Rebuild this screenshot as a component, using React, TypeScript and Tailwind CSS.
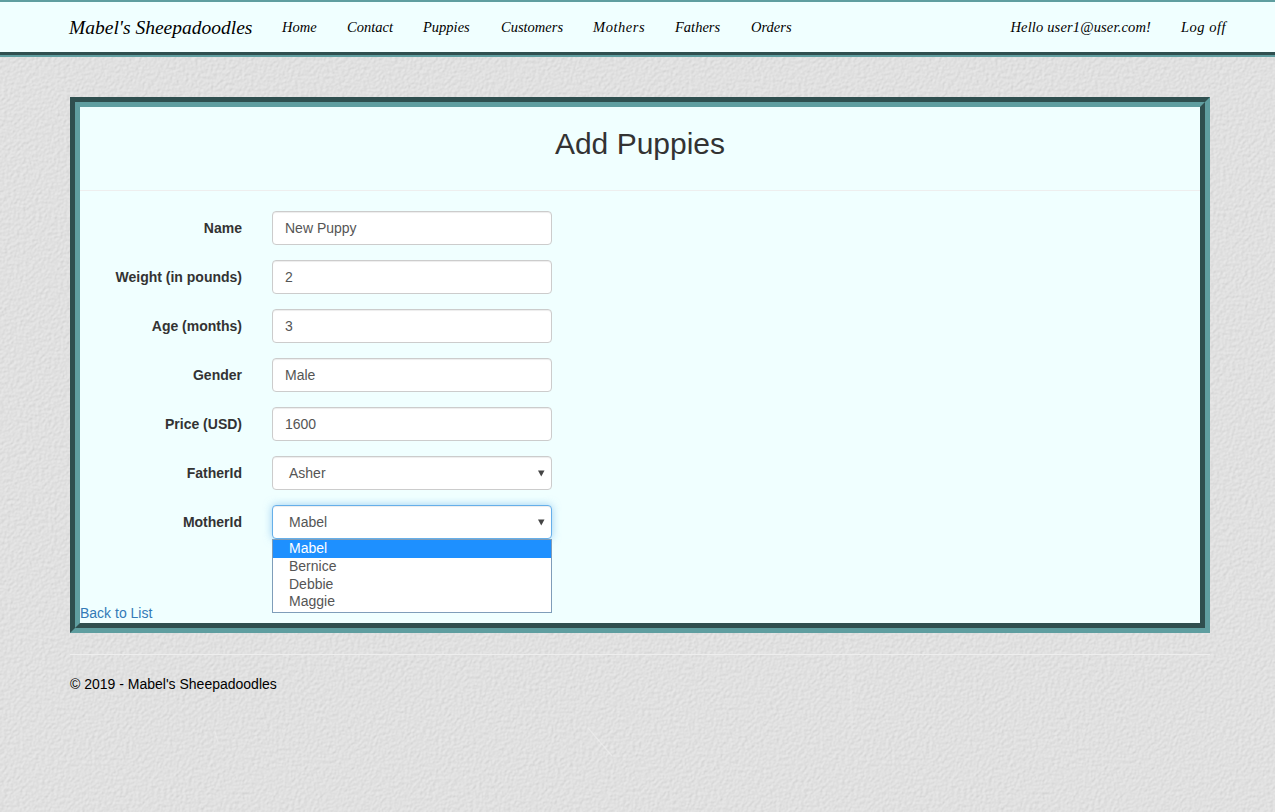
import React from "react";

const sans = "font-['Liberation_Sans',Arial,sans-serif]";
const script = "font-['Liberation_Serif',serif] italic";

function Field({ label, value }: { label: string; value: string }) {
  return (
    <div className="flex items-center h-[34px] mb-[15px]">
      <label className="w-[162px] text-right font-bold text-[14px] text-[#333] shrink-0">{label}</label>
      <div className="ml-[30px] w-[280px] h-[34px] rounded-[4px] border border-[#ccc] bg-white px-3 flex items-center text-[14px] text-[#555] shadow-[inset_0_1px_1px_rgba(0,0,0,0.075)]">
        {value}
      </div>
    </div>
  );
}

function SelectBox({ label, value, focus }: { label: string; value: string; focus?: boolean }) {
  return (
    <div className="flex items-center h-[34px] mb-[15px]">
      <label className="w-[162px] text-right font-bold text-[14px] text-[#333] shrink-0">{label}</label>
      <div
        className={
          focus
            ? "relative ml-[30px] w-[280px] h-[34px] rounded-[4px] border border-[#66afe9] bg-white pl-4 flex items-center text-[14px] text-[#555] shadow-[inset_0_1px_1px_rgba(0,0,0,0.075),0_0_8px_rgba(102,175,233,0.6)]"
            : "relative ml-[30px] w-[280px] h-[34px] rounded-[4px] border border-[#ccc] bg-white pl-4 flex items-center text-[14px] text-[#555] shadow-[inset_0_1px_1px_rgba(0,0,0,0.075)]"
        }
      >
        {value}
        <svg className="absolute right-[6px] top-[13px]" width="7" height="7" viewBox="0 0 7 7">
          <path d="M0 0.5H6.5L3.25 6.5Z" fill="#444" />
        </svg>
      </div>
    </div>
  );
}

const navItems = [
  { t: "Home", c: "w-[35px]" },
  { t: "Contact", c: "w-[46px]" },
  { t: "Puppies", c: "w-[48px]" },
  { t: "Customers", c: "w-[62px]" },
  { t: "Mothers", c: "w-[52px] tracking-[0.55px]" },
  { t: "Fathers", c: "w-[46px]" },
  { t: "Orders", c: "w-[41px]" },
];

export default function App() {
  return (
    <div className={`relative min-h-[812px] overflow-hidden bg-[#dfdfdf] text-[14px] ${sans}`}>
      <svg className="absolute inset-0 w-full h-full" aria-hidden="true">
        <filter id="wall" x="0" y="0" width="100%" height="100%">
          <feTurbulence type="fractalNoise" baseFrequency="0.32" numOctaves="4" seed="11" />
          <feDiffuseLighting surfaceScale="0.45" lightingColor="#ebebeb" diffuseConstant="1.02">
            <feDistantLight azimuth="45" elevation="62" />
          </feDiffuseLighting>
        </filter>
        <rect width="100%" height="100%" filter="url(#wall)" />
        <g fill="none" stroke="#f0f0f0" strokeLinecap="round">
          <path d="M588 728L600 742L612 756" strokeWidth="1.2" opacity="0.55" />
          <path d="M846 642L853 665L851 690L852 730" strokeWidth="2.5" opacity="0.25" />
          <path d="M215 732L218 742" strokeWidth="1.2" opacity="0.5" />
          <path d="M1232 585L1234 612" strokeWidth="1.2" opacity="0.25" />
        </g>
      </svg>

      <div className="relative">
        <header className="h-[57px] border-t-2 border-b-2 border-[#5f9ea0] bg-[#f0ffff]">
          <div className="h-[53px] border-b-[3px] border-b-[#2f4f4f]">
            <div className="h-[50px] flex items-center pt-[1px] pl-[69px] pr-[49px] text-black">
              <span className={`${script} text-[19.5px] w-[213px]`}>Mabel's Sheepadoodles</span>
              <nav className="flex gap-[30px]">
                {navItems.map((n) => (
                  <span key={n.t} className={`${script} text-[14.5px] ${n.c}`}>{n.t}</span>
                ))}
              </nav>
              <span className={`${script} text-[14.5px] ml-auto tracking-[0.15px]`}>Hello user1@user.com!</span>
              <span className={`${script} text-[14.5px] ml-[30px] tracking-[0.5px]`}>Log off</span>
            </div>
          </div>
        </header>

        <main className="mx-[70px] mt-[40px] w-[1140px] h-[536px] border-[5px] border-t-[#2f4f4f] border-l-[#2f4f4f] border-r-[#5f9ea0] border-b-[#5f9ea0]">
          <div className="h-full border-[5px] border-t-[#5f9ea0] border-l-[#5f9ea0] border-r-[#2f4f4f] border-b-[#2f4f4f] bg-[#f0ffff] flex flex-col">
            <h2 className="h-[84px] shrink-0 flex items-center justify-center text-[30px] text-[#333] pb-[11px] border-b border-[#eee]">
              Add Puppies
            </h2>
            <form className="pt-[20px] flex-1 relative">
              <Field label="Name" value="New Puppy" />
              <Field label="Weight (in pounds)" value="2" />
              <Field label="Age (months)" value="3" />
              <Field label="Gender" value="Male" />
              <Field label="Price (USD)" value="1600" />
              <SelectBox label="FatherId" value="Asher" />
              <SelectBox label="MotherId" value="Mabel" focus />
              <div className="absolute left-[192px] top-[348px] w-[280px] h-[74px] border border-[#7f9db9] bg-white text-[14px] text-[#555] leading-[16px]">
                <div className="bg-[#1e90ff] text-white pl-4 h-[18px]">Mabel</div>
                <div className="pl-4 h-[18px]">Bernice</div>
                <div className="pl-4 h-[17px]">Debbie</div>
                <div className="pl-4 h-[18px]">Maggie</div>
              </div>
              <a className="absolute left-0 top-[412px] text-[#337ab7]">Back to List</a>
            </form>
          </div>
        </main>

        <footer className="mx-[70px] w-[1140px] mt-[21px] border-t border-[#eee] pt-[19px] text-black">
          © 2019 - Mabel's Sheepadoodles
        </footer>
      </div>
    </div>
  );
}
